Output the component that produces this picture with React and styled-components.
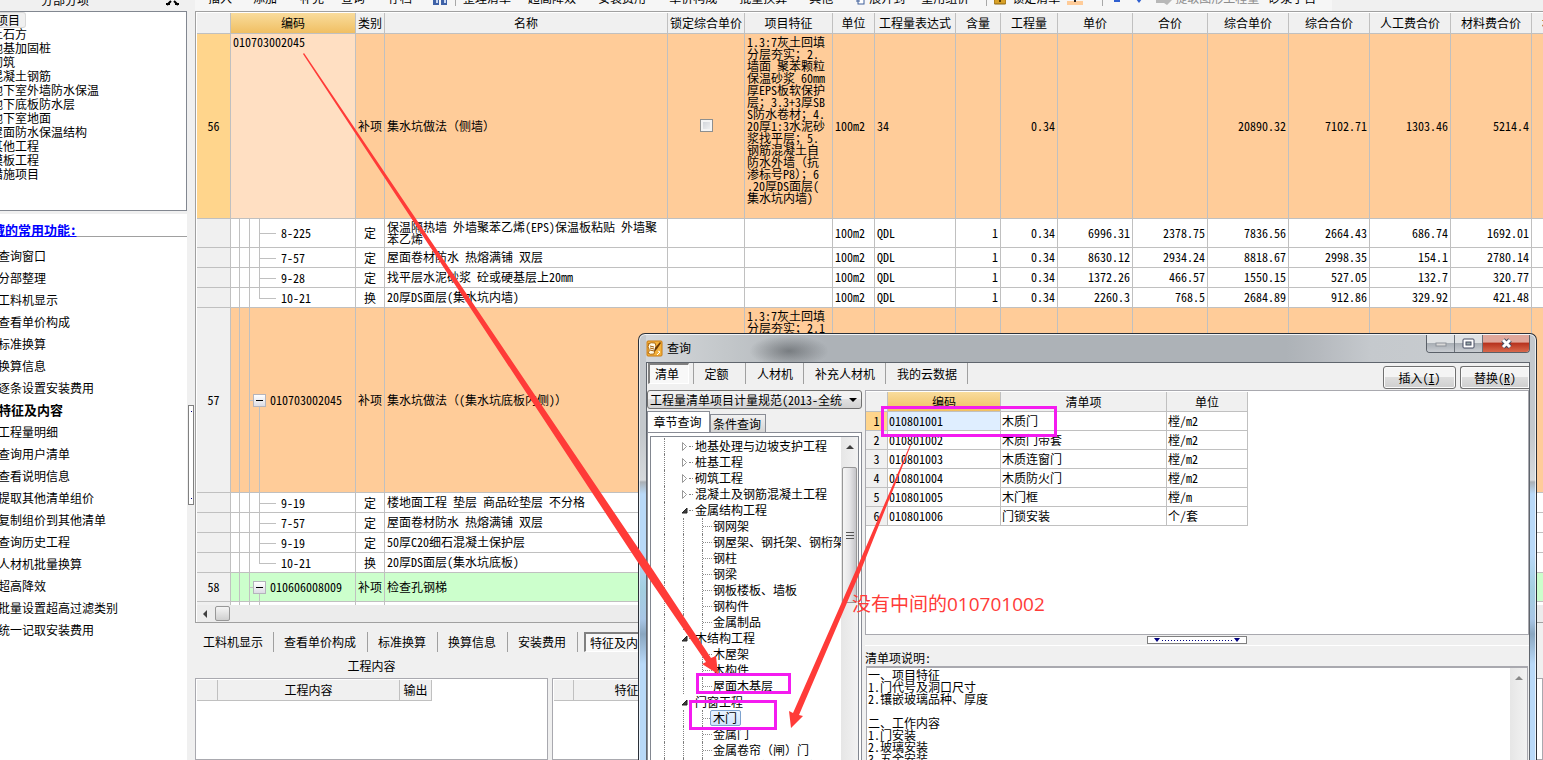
import React from "react";
import styled, { createGlobalStyle, css } from "styled-components";

const GRID = "#c0c0c0";
const FACE = "#f0f0f0";
const ORANGE = "#ffcc99";
const GREEN = "#ccffcc";

const GlobalStyle = createGlobalStyle`
  *, *::before, *::after { box-sizing: border-box; }
  body {
    margin: 0;
    background: ${FACE};
    overflow: hidden;
  }
  body, button, input, select, textarea {
    font-family: "Noto Sans CJK SC", sans-serif;
    font-size: 12px;
    line-height: 16px;
    font-feature-settings: "hwid" 1;
    color: #000;
  }
  button { margin: 0; padding: 0; border: 0; background: none; white-space: nowrap; }
`;

const Desktop = styled.div`
  position: relative;
  display: flex;
  height: 100vh;
  overflow: hidden;
`;

/* Full-width brackets keep their full em box inside half-width text. */
const Wide = styled.span`
  font-feature-settings: normal;
`;

/* ---------- left side ---------- */
const Sidebar = styled.aside`
  flex: 0 0 187px;
  display: flex;
  flex-direction: column;
  overflow: hidden;
`;
const SideTitle = styled.header`
  flex: 0 0 11px;
  display: flex;
  align-items: flex-end;
  justify-content: space-between;
  overflow: hidden;
  padding: 0 8px 3px 41px;
`;
const OutlineTree = styled.ul`
  flex: 0 0 200px;
  margin: 0;
  padding: 1px 0 0;
  list-style: none;
  background: #fff;
  border: 1px solid #828790;
  border-left: 0;
  line-height: 14px;
  white-space: nowrap;
`;
const OutlineItem = styled.li`
  height: 14px;
  margin-left: -9px;
  ${(p) => p.$root && css`
    width: 53px;
    margin-left: -28px;
    background: ${FACE};
    border-radius: 2px;
    box-shadow: 0 0 0 1px #d9d9d9;
  `}
`;
const CommonBox = styled.section`
  flex: 1;
  margin-top: 3px;
  background: #fff;
  white-space: nowrap;
`;
const CommonTitle = styled.h2`
  margin: 0;
  height: 23px;
  padding-top: 8px;
  border-bottom: 1px solid #a0a0a0;
  font-size: 13px;
  line-height: 16px;
  a { color: #0000ff; margin-left: -21px; }
`;
const CommonList = styled.ul`
  margin: 0;
  padding: 8px 0 0;
  list-style: none;
`;
const CommonItem = styled.li`
  height: 22px;
  margin-left: -2px;
  button {
    line-height: 22px;
    font-size: ${(p) => (p.$active ? 13 : 12)}px;
    font-weight: ${(p) => (p.$active ? 700 : 400)};
  }
`;
const SplitBar = styled.div`
  flex: 0 0 8px;
  display: flex;
  flex-direction: column;
  align-items: flex-end;
  padding: 405px 1px 0 0;
`;
const SplitGrip = styled.div`
  width: 6px;
  height: 100px;
  border: 1px solid #808080;
  background: #fff;
  display: flex;
  flex-direction: column;
  justify-content: space-between;
  align-items: center;
  padding: 5px 0;
  &::before, &::after { content: ""; width: 1px; height: 1px; background: #000080; }
`;

/* ---------- main area ---------- */
const Main = styled.main`
  flex: 1;
  min-width: 0;
  display: flex;
  flex-direction: column;
`;
const Toolbar = styled.div`
  flex: 0 0 11px;
  display: flex;
  align-items: flex-end;
  overflow: hidden;
  width: 1137px;
  padding: 0 0 5px 1px;
  background: #f6f6f6;
`;
const Tool = styled.button`
  flex: none;
  margin-left: ${(p) => p.$gap}px;
  color: ${(p) => (p.disabled ? "#8c8c8c" : "#000")};
`;
const ToolIcon = styled.span`
  flex: none;
  display: flex;
  margin-left: ${(p) => p.$gap}px;
`;
const ToolSep = styled.span`
  flex: none;
  width: 1px;
  height: 16px;
  margin-left: ${(p) => p.$gap}px;
  background: #a8a8a8;
`;
const GridFrame = styled.section`
  flex: none;
  border: 1px solid #a0a0a0;
  border-right: 0;
  background: #fff;
  padding: 1px 0 0 1px;
  overflow: hidden;
`;
const GridClip = styled.div`
  height: 592px;
  overflow: hidden;
`;
const SheetTable = styled.table`
  width: 1416px;
  table-layout: fixed;
  border-spacing: 0;
  border-collapse: separate;
  line-height: 12px;
  th, td {
    padding: 0 2px 1px;
    border-right: 1px solid ${GRID};
    border-bottom: 1px solid ${GRID};
    white-space: nowrap;
    overflow: hidden;
  }
  th { font-weight: 400; background: ${FACE}; text-align: center; padding: 0; }
`;
const HotHead = styled.th`
  && { background: linear-gradient(#f9dc9c, #f0bf63); }
`;
const SheetRow = styled.tr`
  height: ${(p) => p.$h}px;
  background: ${(p) => p.$bg || "#fff"};
`;
const IndexCell = styled.th`
  && { background: ${(p) => (p.$current ? "#ffd58c" : FACE)}; }
`;
const Cell = styled.td`
  text-align: ${(p) => p.$align || "left"};
  &&& {
    white-space: ${(p) => (p.$wrap ? "pre-line" : "nowrap")};
    ${(p) => p.$top && css`vertical-align: top; padding-top: 2px;`}
    ${(p) => p.$pale && css`background: #ffdfc2;`}
    ${(p) => p.$flush && css`padding: 0;`}
  }
`;
const TreeLine = styled.div`
  display: flex;
  height: ${(p) => p.$h}px;
  padding-left: 8px;
  line-height: ${(p) => p.$h}px;
`;
const Guide = styled.i`
  flex: none;
  width: 10px;
  border-left: 1px solid ${GRID};
`;
const Branch = styled.i`
  flex: none;
  position: relative;
  width: 22px;
  &::before {
    content: "";
    position: absolute;
    left: 0;
    top: 0;
    width: 1px;
    height: ${(p) => (p.$last ? "50%" : "100%")};
    background: ${GRID};
  }
  &::after {
    content: "";
    position: absolute;
    left: 0;
    top: 50%;
    width: 17px;
    height: 1px;
    background: ${GRID};
  }
`;
const Knot = styled.i`
  flex: none;
  position: relative;
  width: 21px;
  border-left: 1px solid ${GRID};
  &::before {
    content: "";
    position: absolute;
    left: 0;
    top: 50%;
    width: 4px;
    height: 1px;
    background: ${GRID};
  }
  &::after {
    content: "";
    position: absolute;
    left: 9px;
    top: 50%;
    bottom: 0;
    width: 1px;
    background: ${GRID};
  }
`;
const Expander = styled.button`
  position: absolute;
  z-index: 1;
  left: 3px;
  top: calc(50% - 6px);
  width: 13px;
  height: 13px;
  border: 1px solid #b4b4bc;
  outline: 0;
  background: linear-gradient(#000, #000) center / 7px 1px no-repeat, linear-gradient(#fff, #dcdce4);
`;
const Tick = styled.input`
  appearance: none;
  display: block;
  width: 13px;
  height: 13px;
  margin: 0 auto;
  border: 1px solid #8e8f8f;
  background: linear-gradient(135deg, #cbcfd5, #f6f6f6);
  box-shadow: inset 0 0 0 2px #f4f4f4;
`;
const HScroll = styled.div`
  display: flex;
  align-items: center;
  gap: 8px;
  height: 17px;
  padding-left: 5px;
  background: #ececec;
`;
const HThumb = styled.div`
  width: 15px;
  height: 15px;
  border: 1px solid #979797;
  border-radius: 2px;
  background: linear-gradient(#f5f5f5, #cfcfcf);
`;

const LowerTabs = styled.nav`
  flex: none;
  display: flex;
  align-items: center;
  height: 36px;
  padding-top: 2px;
`;
const LowerTab = styled.button`
  flex: none;
  height: 20px;
  padding: 0 11px 0 10px;
  border-right: 1px solid #a0a0a0;
  &:first-child { padding: 0 10px 0 8px; }
  ${(p) => p.$active && css`
    margin-left: 6px;
    padding: 0 5px 0 4px;
    border: 1px solid #fff;
    border-top: 2px solid #808080;
    border-left: 2px solid #808080;
    background: #f8f8f8;
  `}
`;
const LowerPanes = styled.div`
  flex: 1;
  display: flex;
  gap: 4px;
  min-height: 0;
`;
const Pane = styled.section`
  display: flex;
  flex-direction: column;
  flex: ${(p) => p.$flex};
`;
const PaneTitle = styled.h3`
  margin: 0;
  height: 19px;
  line-height: 14px;
  font-size: 12px;
  font-weight: 400;
  text-align: center;
`;
const PaneBody = styled.div`
  flex: 1;
  padding: 1px 0 0 1px;
  border: 1px solid #a9a9af;
  background: #fff;
  overflow: hidden;
`;
const HeadTable = styled.table`
  table-layout: fixed;
  border-spacing: 0;
  width: ${(p) => p.$w}px;
  th {
    height: 21px;
    padding: 0;
    font-weight: 400;
    background: ${FACE};
    border-right: 1px solid ${GRID};
    border-bottom: 1px solid ${GRID};
  }
`;

/* ---------- query window ---------- */
const Window = styled.section`
  position: absolute;
  left: 638px;
  right: 6px;
  top: 333px;
  bottom: 0;
  display: flex;
  flex-direction: column;
  padding: 0 6px 0 7px;
  border: 1px solid #2b3038;
  border-bottom: 0;
  border-radius: 7px 7px 0 0;
  box-shadow: inset 0 1px 0 #f4f5f6, inset 1px 0 0 rgba(255, 255, 255, 0.7), inset -1px 0 0 rgba(255, 255, 255, 0.7);
  background: linear-gradient(#c4c8cc 0, #c4c8cc 100px, #d6d9dc 146px, #aab0b6 148px, #b9d9f8 160px, #b9d9f8 220px, #a3cfe0 255px, #a9c6e6 285px, #8aa6c0 300px, #b9d9f8 330px, #b9d9f8 100%);
`;
const TitleBar = styled.header`
  flex: 0 0 27px;
  display: flex;
  align-items: flex-start;
  margin: 1px 0 0;
  background:
    radial-gradient(ellipse 44px 18px at 143px 16px, rgba(60, 64, 68, 0.5), rgba(60, 64, 68, 0) 90%),
    linear-gradient(90deg, #d4d7da 0, #c3c7ca 80px, #adb2b7 180px, #adb2b7 640px, #b5b9be 76%, #c5c9cd 82%, #c9cdd0 100%);
`;
const Caption = styled.h1`
  flex: 1;
  margin: 0;
  display: flex;
  align-items: center;
  gap: 4px;
  height: 26px;
  font-size: 12px;
  font-weight: 400;
`;
const CaptionButtons = styled.div`
  display: flex;
  height: 18px;
  border: 1px solid #5a6068;
  border-top: 0;
  border-radius: 0 0 4px 4px;
  overflow: hidden;
  button {
    display: grid;
    place-items: center;
    width: 28px;
    background: linear-gradient(#dfe2e4 0 45%, #a9afb5 50%, #c9cdd2);
    border-right: 1px solid #6c727a;
  }
  button:last-child {
    width: 46px;
    border-right: 0;
    background: linear-gradient(#e0a79b 0 40%, #b8341f 50%, #d9694c);
  }
`;
const Client = styled.div`
  flex: 1;
  min-height: 0;
  display: flex;
  flex-direction: column;
  border: 1px solid #5f656d;
  border-bottom: 0;
  background: ${FACE};
`;
const ClientTop = styled.div`
  flex: 0 0 27px;
  display: flex;
  align-items: flex-start;
  justify-content: space-between;
  overflow: hidden;
`;
const KindTabs = styled.nav`
  display: flex;
  padding: 0 0 0 1px;
`;
const KindTab = styled.button`
  height: 21px;
  padding: 0 10px 0 11px;
  min-width: 52px;
  border-right: 1px solid #a0a0a0;
  ${(p) => p.$active && css`
    min-width: 41px;
    margin-right: 4px;
    padding: 0 4px 0 0;
    border: 1px solid #fff;
    border-top: 2px solid #808080;
    border-left: 2px solid #808080;
    background: #f8f8f8;
    & + button { border-left: 1px solid #a0a0a0; min-width: 53px; padding: 0 6px 0 0; }
  `}
`;
const Actions = styled.div`
  display: flex;
  gap: 4px;
  padding-top: 3px;
`;
const PushButton = styled.button`
  width: 73px;
  height: 23px;
  border: 1px solid #707070;
  border-radius: 3px;
  background: linear-gradient(#f4f4f4 0 48%, #dddddd 50%, #cfcfcf);
  box-shadow: inset 0 0 0 1px #fbfbfb;
  &:last-child { width: 69px; border-radius: 3px 0 0 3px; border-right: 0; }
`;
const ClientBody = styled.div`
  flex: 1;
  min-height: 0;
  display: flex;
  gap: 3px;
`;
const ChapterPane = styled.div`
  flex: 0 0 215px;
  display: flex;
  flex-direction: column;
  min-width: 0;
`;
const Chooser = styled.label`
  position: relative;
  display: block;
  select {
    display: block;
    appearance: none;
    width: 215px;
    height: 19px;
    padding: 0 18px 0 2px;
    border: 1px solid #707070;
    border-radius: 3px;
    background: linear-gradient(#f2f2f2 0 48%, #e0e0e0 50%, #d2d2d2);
    line-height: 17px;
  }
  svg { position: absolute; right: 5px; top: 8px; }
`;
const ViewTabs = styled.nav`
  display: flex;
  align-items: flex-end;
  height: 21px;
  margin-top: 2px;
`;
const ViewTab = styled.button`
  width: ${(p) => (p.$active ? 63 : 56)}px;
  height: ${(p) => (p.$active ? 21 : 18)}px;
  padding-right: 2px;
  border: 1px solid #898c95;
  border-bottom: 0;
  background: ${(p) => (p.$active ? "#fff" : "linear-gradient(#f2f2f2, #d4d4d4)")};
`;
const ViewPage = styled.div`
  flex: 1;
  min-height: 0;
  display: flex;
  padding: 3px 2px 0 2px;
  border: 1px solid #898c95;
  border-bottom: 0;
  background: #fff;
`;
const ChapterFrame = styled.div`
  flex: 1;
  min-width: 0;
  display: flex;
  border: 1px solid #828790;
  border-bottom: 0;
`;
const ChapterTree = styled.ul`
  flex: 1;
  min-width: 0;
  margin: 0;
  padding: 1px 0 0;
  list-style: none;
  overflow: hidden;
  white-space: nowrap;
`;
const ChapterRow = styled.li`
  display: flex;
  height: 16px;
  padding-left: 13px;
`;
const Dots = styled.i`
  flex: none;
  width: ${(p) => p.$w}px;
  border-left: 1px dotted #808080;
`;
const DotTick = styled.i`
  flex: none;
  width: ${(p) => p.$w}px;
  height: 9px;
  margin-right: 2px;
  border-bottom: 1px dotted #808080;
`;
const DotStem = styled.i`
  flex: none;
  width: 11px;
  background:
    linear-gradient(90deg, #909090 50%, transparent 0) 0 8px / 2px 1px repeat-x;
  border-left: 1px dotted #808080;
`;
const ArrowBox = styled.span`
  flex: none;
  display: flex;
  align-items: center;
  width: 8px;
`;
const Picked = styled.span`
  height: 16px;
  margin-left: -3px;
  padding: 0 3px 0 2px;
  line-height: 14px;
  border: 1px solid #7da2ce;
  border-radius: 2px;
  background: linear-gradient(#eaf3fe, #cfe3fc);
`;
const VScroll = styled.div`
  flex: 0 0 17px;
  display: flex;
  flex-direction: column;
  align-items: center;
  padding-top: 8px;
  background: linear-gradient(90deg, #e6e6e6, #f2f2f2);
`;
const VThumb = styled.div`
  display: grid;
  place-items: center;
  width: 15px;
  height: 136px;
  margin-top: 18px;
  border: 1px solid #979797;
  border-radius: 2px;
  background: linear-gradient(90deg, #f5f5f5, #e6e6e8 50%, #c4c4c8);
`;
const ItemPane = styled.div`
  flex: 1;
  min-width: 0;
  display: flex;
  flex-direction: column;
`;
const ItemFrame = styled.div`
  flex: 0 0 245px;
  border: 1px solid #a9a9af;
  background: #fff;
`;
const ItemTable = styled.table`
  width: 382px;
  table-layout: fixed;
  border-spacing: 0;
  line-height: 14px;
  margin-top: 1px;
  th, td {
    height: 19px;
    padding: 0 1px;
    border-right: 1px solid ${GRID};
    border-bottom: 1px solid ${GRID};
    font-weight: 400;
    text-align: left;
  }
  thead th { height: 20px; text-align: center; background: ${FACE}; }
  tbody th { text-align: center; background: ${FACE}; padding: 0; }
  tbody tr:first-child th { background: #ffd58c; }
  tbody tr:first-child td:nth-child(2) { background: #dfeeff; }
`;
const PaneGrip = styled.div`
  flex: 0 0 11px;
  display: flex;
  justify-content: center;
  padding-top: 1px;
  border-bottom: 1px solid #fff;
`;
const GripBox = styled.div`
  display: flex;
  align-items: center;
  justify-content: space-between;
  width: 100px;
  height: 8px;
  padding: 0 6px;
  border: 1px solid #808080;
  background: #fff;
  i { width: 70px; height: 1px; background: repeating-linear-gradient(90deg, #000080 0 1px, transparent 1px 3px); }
`;
const NoteBlock = styled.div`
  flex: 1;
  min-height: 0;
  display: flex;
  flex-direction: column;
  padding-right: 1px;
  label { flex: 0 0 20px; padding-top: 4px; line-height: 16px; }
`;
const NoteFrame = styled.div`
  flex: 1;
  min-height: 0;
  display: flex;
  margin-left: 1px;
  border: 1px solid #a9a9af;
  border-top-width: 2px;
  border-bottom: 0;
  background: #fff;
  textarea {
    flex: 1;
    display: block;
    resize: none;
    margin: 0;
    padding: 1px 0 0 1px;
    border: 0;
    outline: 0;
    overflow: hidden;
    line-height: 12px;
  }
`;

/* ---------- marks drawn over the windows ---------- */
const Marks = styled.svg`
  position: absolute;
  left: 0;
  top: 0;
  pointer-events: none;
`;
const Remark = styled.p`
  position: absolute;
  left: 852px;
  top: 592px;
  margin: 0;
  font: 19px/24px "Open Sans", "Noto Sans CJK SC", sans-serif;
  font-feature-settings: normal;
  color: #ff3b38;
  white-space: nowrap;
`;

const OUTLINE = ["土石方", "地基加固桩", "砌筑", "混凝土钢筋", "地下室外墙防水保温", "地下底板防水层", "地下室地面", "屋面防水保温结构", "其他工程", "模板工程", "措施项目"];
const COMMON = ["查询窗口", "分部整理", "工料机显示", "查看单价构成", "标准换算", "换算信息", "逐条设置安装费用", "特征及内容", "工程量明细", "查询用户清单", "查看说明信息", "提取其他清单组价", "复制组价到其他清单", "查询历史工程", "人材机批量换算", "超高降效", "批量设置超高过滤类别", "统一记取安装费用"];
const COLS = [34, 125, 29, 283, 77, 88, 42, 81, 45, 57, 75, 75, 81, 81, 81, 81, 81];
const HEADS = ["类别", "名称", "锁定综合单价", "项目特征", "单位", "工程量表达式", "含量", "工程量", "单价", "合价", "综合单价", "综合合价", "人工费合价", "材料费合价", "机械费合价"];

const FEATURE_56 = `1.3:7灰土回填
分层夯实；2.
墙面 聚苯颗粒
保温砂浆 60mm
厚EPS板软保护
层；3.3+3厚SB
S防水卷材；4.
20厚1:3水泥砂
浆找平层；5.
钢筋混凝土自
防水外墙（抗
渗标号P8）；6
.20厚DS面层(
集水坑内墙)`;
const FEATURE_57 = `1.3:7灰土回填
分层夯实；2.1`;

const ROWS = [
  { h: 185, no: "56", kind: "current", code: "010703002045", type: "补项", name: "集水坑做法（侧墙）", feat: FEATURE_56, bg: ORANGE, v: ["100m2", "34", "", "0.34", "", "", "20890.32", "7102.71", "1303.46", "5214.4"] },
  { h: 29, kind: "leaf", code: "8-225", type: "定", name: "保温隔热墙 外墙聚苯乙烯(EPS)保温板粘贴 外墙聚\n苯乙烯", v: ["100m2", "QDL", "1", "0.34", "6996.31", "2378.75", "7836.56", "2664.43", "686.74", "1692.01"] },
  { h: 20, kind: "leaf", code: "7-57", type: "定", name: "屋面卷材防水 热熔满铺 双层", v: ["100m2", "QDL", "1", "0.34", "8630.12", "2934.24", "8818.67", "2998.35", "154.1", "2780.14"] },
  { h: 20, kind: "leaf", code: "9-28", type: "定", name: "找平层水泥砂浆 砼或硬基层上20mm", v: ["100m2", "QDL", "1", "0.34", "1372.26", "466.57", "1550.15", "527.05", "132.7", "320.77"] },
  { h: 20, kind: "last", code: "10-21", type: "换", name: "20厚DS面层(集水坑内墙)", v: ["100m2", "QDL", "1", "0.34", "2260.3", "768.5", "2684.89", "912.86", "329.92", "421.48"] },
  { h: 185, no: "57", kind: "group", code: "010703002045", type: "补项", name: "集水坑做法（(集水坑底板内侧)）", feat: FEATURE_57, bg: ORANGE },
  { h: 20, kind: "leaf", code: "9-19", type: "定", name: "楼地面工程 垫层 商品砼垫层 不分格" },
  { h: 20, kind: "leaf", code: "7-57", type: "定", name: "屋面卷材防水 热熔满铺 双层" },
  { h: 20, kind: "leaf", code: "9-19", type: "定", name: "50厚C20细石混凝土保护层" },
  { h: 20, kind: "last", code: "10-21", type: "换", name: "20厚DS面层(集水坑底板)" },
  { h: 29, no: "58", kind: "group", code: "010606008009", type: "补项", name: "检查孔钢梯", bg: GREEN },
  { h: 20, kind: "leaf", code: "", type: "", name: "" },
];

const CHAPTERS = [
  ["closed", "地基处理与边坡支护工程"], ["closed", "桩基工程"], ["closed", "砌筑工程"], ["closed", "混凝土及钢筋混凝土工程"],
  ["open", "金属结构工程"], ["leaf", "钢网架"], ["leaf", "钢屋架、钢托架、钢桁架"], ["leaf", "钢柱"], ["leaf", "钢梁"],
  ["leaf", "钢板楼板、墙板"], ["leaf", "钢构件"], ["leaf", "金属制品"],
  ["open", "木结构工程"], ["leaf", "木屋架"], ["leaf", "木构件"], ["leaf", "屋面木基层"],
  ["open", "门窗工程"], ["picked", "木门"], ["leaf", "金属门"], ["leaf", "金属卷帘（闸）门"], ["leaf", "厂库房大门、特种门"],
];
const ITEMS = [
  ["010801001", "木质门", "樘/m2"], ["010801002", "木质门带套", "樘/m2"], ["010801003", "木质连窗门", "樘/m2"],
  ["010801004", "木质防火门", "樘/m2"], ["010801005", "木门框", "樘/m"], ["010801006", "门锁安装", "个/套"],
];
const NOTE = `一、项目特征
1.门代号及洞口尺寸
2.镶嵌玻璃品种、厚度

二、工作内容
1.门安装
2.玻璃安装
3.五金安装`;

function Mixed({ text }) {
  if (!text) return null;
  return text.split(/([（）])/).map((part, i) => (i % 2 ? <Wide key={i}>{part}</Wide> : part));
}

function CodeCell({ row }) {
  const inner = row.h - 1;
  if (row.kind === "current") return <Cell $top $pale>{row.code}</Cell>;
  return (
    <Cell $flush>
      <TreeLine $h={inner}>
        <Guide />
        {row.kind === "group" ? (
          <Knot><Expander aria-label="折叠" /></Knot>
        ) : (
          <>
            <Guide />
            <Branch $last={row.kind === "last"} />
          </>
        )}
        {row.code}
      </TreeLine>
    </Cell>
  );
}

function Sheet() {
  return (
    <GridFrame>
      <GridClip>
        <SheetTable>
          <colgroup>{COLS.map((w, i) => <col key={i} width={w} />)}</colgroup>
          <thead>
            <SheetRow $h={21}>
              <th />
              <HotHead>编码</HotHead>
              {HEADS.map((h) => <th key={h}>{h}</th>)}
            </SheetRow>
          </thead>
          <tbody>
            {ROWS.map((r, i) => (
              <SheetRow key={i} $h={r.h} $bg={r.bg}>
                <IndexCell $current={r.kind === "current"}>{r.no}</IndexCell>
                <CodeCell row={r} />
                <Cell $align="center" $flush>{r.type}</Cell>
                <Cell $wrap><Mixed text={r.name} /></Cell>
                <Cell>{r.feat && <Tick type="checkbox" aria-label="锁定综合单价" />}</Cell>
                <Cell $wrap $top><Mixed text={r.feat} /></Cell>
                {Array.from({ length: 11 }, (_, k) => (
                  <Cell key={k} $align={k > 1 ? "right" : "left"}>{r.v && r.v[k]}</Cell>
                ))}
              </SheetRow>
            ))}
          </tbody>
        </SheetTable>
      </GridClip>
      <HScroll>
        <svg width="5" height="8"><path d="M5 0v8L1 4z" fill="#404040" /></svg>
        <HThumb />
      </HScroll>
    </GridFrame>
  );
}

function MainToolbar() {
  return (
    <Toolbar>
      <Tool $gap={12}>插入</Tool>
      <Tool $gap={21}>添加</Tool>
      <Tool $gap={23}>补充</Tool>
      <Tool $gap={17}>查询</Tool>
      <Tool $gap={23}>存档</Tool>
      <ToolIcon $gap={20}>
        <svg width="15" height="9"><path d="M1 0h6v8H1zM9 0h6v8H9z" fill="#3f62a8" /><path d="M4 0h2v6H4zM12 0h2v6h-2z" fill="#c9d8f2" /></svg>
      </ToolIcon>
      <ToolSep $gap={8} />
      <Tool $gap={7}>整理清单</Tool>
      <Tool $gap={17}>超高降效</Tool>
      <Tool $gap={22}>安装费用</Tool>
      <Tool $gap={23}>单价构成</Tool>
      <Tool $gap={22}>批量换算</Tool>
      <Tool $gap={22}>其他</Tool>
      <ToolIcon $gap={23}>
        <svg width="9" height="12"><rect x="2" y="2" width="6" height="8" fill="#fff" stroke="#3f5f9a" /><path d="M0 7h4" stroke="#3f5f9a" /></svg>
      </ToolIcon>
      <Tool $gap={4}>展开到</Tool>
      <Tool $gap={16}>重用组价</Tool>
      <ToolSep $gap={17} />
      <ToolIcon $gap={7}>
        <svg width="12" height="12"><rect x="0" y="0" width="12" height="10" rx="1" fill="#d8a128" stroke="#8c6410" /><path d="M6 5v3" stroke="#5c3f06" strokeWidth="2" /></svg>
      </ToolIcon>
      <Tool $gap={6}>锁定清单</Tool>
      <ToolIcon $gap={7}>
        <svg width="16" height="12"><path d="M0 7h16v4H0z" fill="#ffcc99" /><path d="M8 2v6" stroke="#222" strokeWidth="2" /></svg>
      </ToolIcon>
      <ToolSep $gap={19} />
      <ToolIcon $gap={11}>
        <svg width="6" height="12"><path d="M0 6h6v2H0z" fill="#2f5fd0" /></svg>
      </ToolIcon>
      <ToolIcon $gap={16}>
        <svg width="6" height="12"><path d="M3 9L0 5h6z" fill="#2f5fd0" /></svg>
      </ToolIcon>
      <ToolIcon $gap={14}>
        <svg width="16" height="12"><path d="M0 3h9V0l7 6-5 5-3-2H0z" fill="#b8b8b8" /></svg>
      </ToolIcon>
      <Tool $gap={3} disabled>提取图形工程量</Tool>
      <Tool $gap={9}>砂浆子目</Tool>
    </Toolbar>
  );
}

function ChapterItem({ kind, text }) {
  const parent = kind === "open" || kind === "closed";
  return (
    <ChapterRow>
      <Dots $w={parent ? 17 : 19} />
      {parent ? (
        <>
          <ArrowBox>
            <svg width="8" height="9">
              {kind === "open"
                ? <path d="M6 2v5H1z" fill="#404040" stroke="#222" />
                : <path d="M1.500 0.500v8l4-4z" fill="#fff" stroke="#989898" />}
            </svg>
          </ArrowBox>
          <DotTick $w={4} />
        </>
      ) : (
        <>
          <Dots $w={19} />
          <DotStem />
        </>
      )}
      {kind === "picked" ? <Picked>{text}</Picked> : <span><Mixed text={text} /></span>}
    </ChapterRow>
  );
}

function QueryWindow() {
  return (
    <Window>
      <TitleBar>
        <Caption>
          <svg width="17" height="17" viewBox="0 0 17 17">
            <rect x="1" y="1" width="15" height="15" rx="1" fill="#f3b13c" stroke="#c97a12" strokeWidth="1" />
            <path d="M2 4q3-2 7-1l1 3-2 8q-4 1-6-1 2-2 1-4-2-2 0-5z" fill="#fffbe8" stroke="#b06a10" />
            <path d="M4 6l4 1M4 8l4 1M4 10l4 1" stroke="#a35c08" />
            <path d="M14 2L9 8l-1 4 3-3 4-6z" fill="#6b3804" />
            <path d="M12 11l2 1-3 3" stroke="#fff" fill="none" />
          </svg>
          查询
        </Caption>
        <CaptionButtons>
          <button aria-label="最小化"><svg width="12" height="6"><rect x="1" y="2" width="10" height="3" fill="#d8d8d8" stroke="#8d9299" /></svg></button>
          <button aria-label="最大化"><svg width="13" height="11"><rect x="1" y="1" width="11" height="9" rx="1" fill="#fff" stroke="#454b60" /><rect x="4" y="4" width="5" height="3" fill="#9aa" stroke="#454b60" /></svg></button>
          <button aria-label="关闭"><svg width="13" height="11"><path d="M3 2l7 7M10 2l-7 7" stroke="#454b60" strokeWidth="5" /><path d="M3 2l7 7M10 2l-7 7" stroke="#fff" strokeWidth="3" /></svg></button>
        </CaptionButtons>
      </TitleBar>
      <Client>
        <ClientTop>
          <KindTabs>
            <KindTab $active>清单</KindTab>
            <KindTab>定额</KindTab>
            <KindTab>人材机</KindTab>
            <KindTab>补充人材机</KindTab>
            <KindTab>我的云数据</KindTab>
          </KindTabs>
          <Actions>
            <PushButton>插入(<u>I</u>)</PushButton>
            <PushButton>替换(<u>R</u>)</PushButton>
          </Actions>
        </ClientTop>
        <ClientBody>
          <ChapterPane>
            <Chooser>
              <select aria-label="清单规范"><option>工程量清单项目计量规范(2013-全统</option></select>
              <svg width="8" height="4"><path d="M0 0h8L4 4z" fill="#000" /></svg>
            </Chooser>
            <ViewTabs>
              <ViewTab $active>章节查询</ViewTab>
              <ViewTab>条件查询</ViewTab>
            </ViewTabs>
            <ViewPage>
              <ChapterFrame>
                <ChapterTree>
                  {CHAPTERS.map(([kind, text]) => <ChapterItem key={text} kind={kind} text={text} />)}
                </ChapterTree>
                <VScroll>
                  <svg width="8" height="4"><path d="M0 4h8L4 0z" fill="#404040" /></svg>
                  <VThumb>
                    <svg width="8" height="9"><path d="M0 1h8M0 4h8M0 7h8" stroke="#555" strokeWidth="1" shapeRendering="crispEdges" /></svg>
                  </VThumb>
                </VScroll>
              </ChapterFrame>
            </ViewPage>
          </ChapterPane>
          <ItemPane>
            <ItemFrame>
              <ItemTable>
                <colgroup><col width="22" /><col width="113" /><col width="166" /><col width="81" /></colgroup>
                <thead><tr><th /><HotHead>编码</HotHead><th>清单项</th><th>单位</th></tr></thead>
                <tbody>
                  {ITEMS.map(([code, name, unit], i) => (
                    <tr key={code}><th>{i + 1}</th><td>{code}</td><td>{name}</td><td>{unit}</td></tr>
                  ))}
                </tbody>
              </ItemTable>
            </ItemFrame>
            <PaneGrip>
              <GripBox>
                <svg width="6" height="4"><path d="M0 0h6L3 4z" fill="#000080" /></svg>
                <i />
                <svg width="6" height="4"><path d="M0 0h6L3 4z" fill="#000080" /></svg>
              </GripBox>
            </PaneGrip>
            <NoteBlock>
              <label htmlFor="item-note">清单项说明:</label>
              <NoteFrame>
                <textarea id="item-note" readOnly value={NOTE} />
                <VScroll>
                  <svg width="8" height="4"><path d="M0 4h8L4 0z" fill="#888" /></svg>
                </VScroll>
              </NoteFrame>
            </NoteBlock>
          </ItemPane>
        </ClientBody>
      </Client>
    </Window>
  );
}

export default function App() {
  return (
    <>
      <GlobalStyle />
      <Desktop>
        <Sidebar>
          <SideTitle>
            分部分项
            <svg width="13" height="12"><path d="M1 9l4-4M12 9L8 5M0 8h4M9 8h4" stroke="#000" strokeWidth="2" /></svg>
          </SideTitle>
          <OutlineTree>
            <OutlineItem $root>整个项目</OutlineItem>
            {OUTLINE.map((t) => <OutlineItem key={t}>{t}</OutlineItem>)}
          </OutlineTree>
          <CommonBox>
            <CommonTitle><a href="#common">隐藏的常用功能:</a></CommonTitle>
            <CommonList>
              {COMMON.map((t) => (
                <CommonItem key={t} $active={t === "特征及内容"}><button>{t}</button></CommonItem>
              ))}
            </CommonList>
          </CommonBox>
        </Sidebar>
        <SplitBar><SplitGrip /></SplitBar>
        <Main>
          <MainToolbar />
          <Sheet />
          <LowerTabs>
            <LowerTab>工料机显示</LowerTab>
            <LowerTab>查看单价构成</LowerTab>
            <LowerTab>标准换算</LowerTab>
            <LowerTab>换算信息</LowerTab>
            <LowerTab>安装费用</LowerTab>
            <LowerTab $active>特征及内容</LowerTab>
          </LowerTabs>
          <LowerPanes>
            <Pane $flex="0 0 353px">
              <PaneTitle>工程内容</PaneTitle>
              <PaneBody>
                <HeadTable $w={235}>
                  <colgroup><col width="21" /><col width="182" /><col width="32" /></colgroup>
                  <thead><tr><th /><th>工程内容</th><th>输出</th></tr></thead>
                </HeadTable>
              </PaneBody>
            </Pane>
            <Pane $flex="1">
              <PaneTitle>特征</PaneTitle>
              <PaneBody>
                <HeadTable $w={340}>
                  <colgroup><col width="20" /><col width="106" /><col width="182" /><col width="32" /></colgroup>
                  <thead><tr><th /><th>特征</th><th>特征值</th><th>输出</th></tr></thead>
                </HeadTable>
              </PaneBody>
            </Pane>
          </LowerPanes>
        </Main>
        <QueryWindow />
        <Marks width="1543" height="760" viewBox="0 0 1543 760">
          <g fill="none" stroke="#f41bf0" strokeWidth="3">
            <rect x="882.500" y="407.500" width="173" height="28" />
            <rect x="697.500" y="674.500" width="92" height="18" />
            <rect x="690.500" y="701.500" width="85" height="27" />
          </g>
          <g fill="#ff3b38">
            <path d="M303 54L643 570L706 662L702 664L718 674L716 656L711 658L653 570L304 53Z" />
            <path d="M910 445L856 570L793 713L789 711L791 728L803 716L799 715L861 570L911 445Z" />
          </g>
        </Marks>
        <Remark>没有中间的010701002</Remark>
      </Desktop>
    </>
  );
}
